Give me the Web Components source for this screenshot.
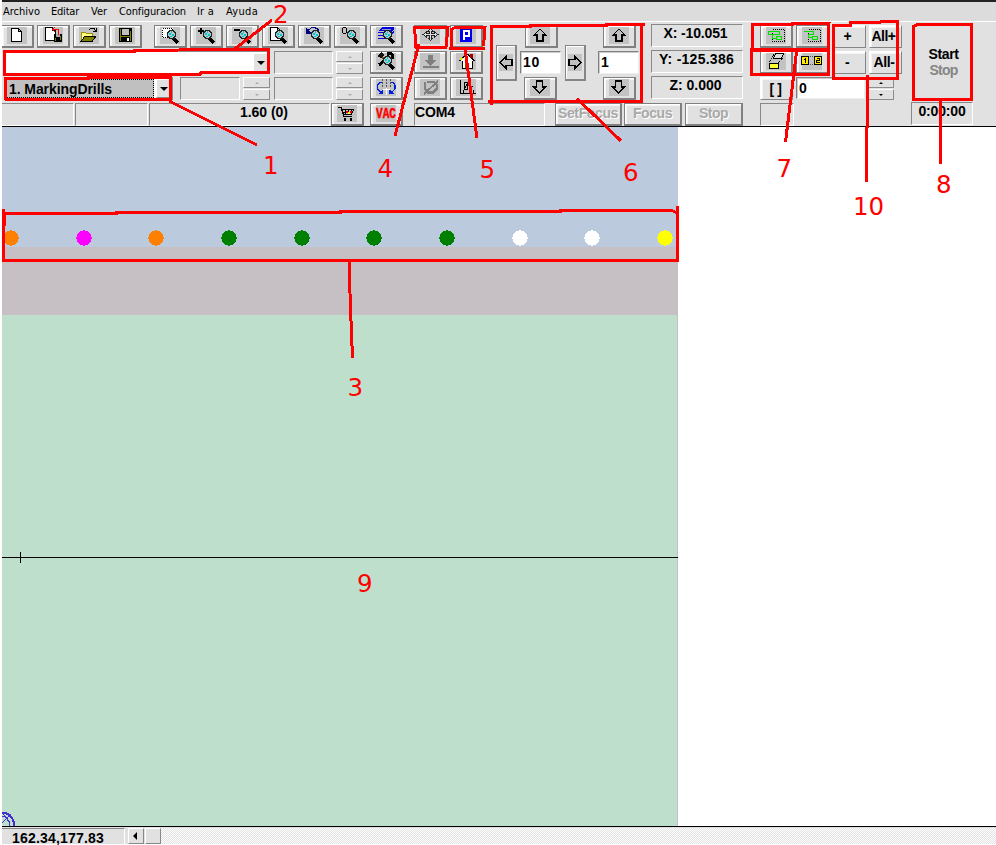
<!DOCTYPE html>
<html lang="es">
<head>
<meta charset="utf-8">
<title>MarkingDrills</title>
<style>
html,body{margin:0;background:#fff}
body{width:996px;height:845px;overflow:hidden;position:relative}
</style>
</head>
<body>
<cnc-app></cnc-app>
<script>
const glass = `<path d="M19 14l5 5" stroke="#000" stroke-width="3"/><circle cx="17.5" cy="10.5" r="4" fill="#b8c8c8" stroke="#222" stroke-width="1.3"/><path d="M15 9h2v2h-2zM18 10h2v2h-2zM17 7h1v2h-1zM16 12h2v1h-2z" fill="#00c8d0"/>`;
const page = (x, y) => `<path d="M${x + .5} ${y + .5}h7l3 3v10h-10zM${x + 7.5} ${y + .5}v3h3" fill="#fff" stroke="#000"/>`;
const arrow = (r, x, y) => `<path transform="translate(${x} ${y}) rotate(${r})" d="M0 -6L6 0H3V6H-3V0H-6Z" fill="#c0c0c0" stroke="#000" stroke-width="1.200"/>`;
const ICONS = {
  newdoc: page(10, 4),
  import: page(8, 3) + `<path d="M17 10h8v8h-8z" fill="#000"/><path d="M19 10h4v3h-4z" fill="#aaa"/><path d="M18 14h1v3h-1zM23 12h1v4h-1z" fill="#808000"/><path d="M16 5.500h5.500V11M18 3l-2 2.500 2 2.500" fill="none" stroke="#f00"/>`,
  open: `<path d="M8 17V8h4l1 1h6v3" fill="#ffff80" stroke="#a09000"/><path d="M8 17.500l4-5.500h11l-4 5.500z" fill="#808000" stroke="#000"/><path d="M16 5.500l2-1h3l2 3M20 7.500h3.500V4" fill="none" stroke="#000"/>`,
  save: `<path d="M10 4h13v14H10z" fill="#000"/><path d="M11 5h1v12h-1zM21 7h1v10h-1zM12 12h9v1h-9z" fill="#808000"/><path d="M13 5h7v6h-7z" fill="#c0c0c0"/><path d="M18 14h2v3h-2z" fill="#fff"/>`,
  zsel: `<path d="M8 4h11v10H8z" fill="#fff"/><path d="M8.500 4.500h10v9h-10z" fill="none" stroke="#000" stroke-dasharray="1 1"/>` + glass,
  zin: `<path d="M8 7h6M11 4v6" stroke="#000" stroke-width="2"/>` + glass,
  zout: `<path d="M8 6h6" stroke="#000" stroke-width="2"/>` + glass,
  zpage: page(8, 3) + glass,
  zback: `<path d="M10 7c3-5 9-4 11 0" fill="none" stroke="#000080"/><path d="M8 4v6h6z" fill="#000080"/>` + glass,
  zzero: `<path d="M9.500 3.500h2l1 1v4l-1 1h-2l-1-1v-4z" fill="none" stroke="#000"/>` + glass,
  zlayers: `<path d="M12 3h12l-4 4H8z" fill="#0000e0"/><path d="M12 5h9" stroke="#99b"/><path d="M8 8.500h12l4-4M8 11.500h12l4-4M8 14.500h12" stroke="#0000e0" stroke-width="1.500" fill="none"/>` + glass,
  tools: `<path d="M9 15l10-9M17 3l5 1 1 5" stroke="#000" stroke-width="3" fill="none"/><path d="M10 5l9 8" stroke="#806000" stroke-width="2"/><path d="M7 6l4-4 4 3-4 3z" fill="#111"/>` + glass,
  rotate: `<path d="M12 6.500H9.500L7.500 9v4l4 4M20 6.500h3l2 2.500v4l-4 4" fill="none" stroke="#0020e0" stroke-width="1.300"/><path d="M13 18H8l5-5zM19 18h5l-5-5z" fill="#0020e0"/><path d="M12.500 3v8M16.500 3v8M20.500 3v8" stroke="#555" stroke-dasharray="2 1"/><path d="M13 13.500h7M16.500 12v7" stroke="#fff"/>`,
  cart: `<path d="M7 5.500h3l3 9h8M10.500 7.500h12l-2 5h-8M14.500 8v5M17.500 8v5M20.500 8v5M12 10.500h10" fill="none" stroke="#000"/><path d="M13 16h2v3h-2zM19 16h2v3h-2z"/><path d="M15 9h2v2h-2zM19 9h2v2h-2z" fill="#e00"/><path d="M17 10h2v2h-2z" fill="#ff0"/>`,
  vac: '',
  move: `<path d="M16.500 4.500l2.500 2.500h-1.500v2.500h3V8l3.500 2.500-3.500 2.500v-1.500h-3V14H19l-2.500 2.500L14 14h1.500v-2.500h-3V13L9 10.500 12.500 8v1.500h3V7H14z" fill="#ddd" stroke="#222"/>`,
  park: `<path d="M10 4h12v14H10z" fill="#0000f0"/><path d="M14 16V7h5v5h-4" fill="none" stroke="#fff" stroke-width="2"/>`,
  down: `<path d="M14 5h5v5h4l-6.500 6L10 10h4zM9 16h16v2H9z" fill="#808080"/>`,
  home: `<path d="M12 10h10v8H12z" fill="#fff" stroke="#000"/><path d="M9 11l8-7 8 7" fill="#fff" stroke="#000" stroke-width="1.300"/><path d="M20 4h3v4h-3z" fill="#a00"/><path d="M15 13h3v5h-3z" fill="#805000"/><path d="M10 10l2-2" stroke="#dd0" stroke-width="2"/>`,
  tool0: `<path d="M11 6v7l3 3.500h5l4-4V9l-3-3h-7" fill="none" stroke="#808080" stroke-width="2.500"/><path d="M10 18L24 5" fill="none" stroke="#808080" stroke-width="2"/>`,
  origin: `<path d="M10.500 4v13.500H26M13 17v-3M23 17v-3" fill="none" stroke="#000"/><path d="M14.500 6.500h3v7h-3zM19 13v-3h4M14 13l4-6" fill="none" stroke="#000"/>`,
  up: arrow(0, 16, 11), dn: arrow(180, 15.5, 11),
  sel1: `<path d="M12.500 5.500h12v12h-12z" fill="none" stroke="#000" stroke-dasharray="1 1"/><path d="M8.500 7.500h11v3h-11zM16.500 12.500h5v3h-5zM12.500 10.500v4h4" fill="none" stroke="#00e000"/>`,
  sel2: `<path d="M12.500 5.500h12v12h-12z" fill="none" stroke="#000" stroke-dasharray="1 1"/><path d="M8 7.500h9.500v3h-5v3h4M16.500 12.500h5v3h-5z" fill="none" stroke="#00e000"/>`,
  layers: `<path d="M9.500 12.500L14 4M18 13l5-5" stroke="#000" stroke-dasharray="1 1"/><path d="M15.500 3.500h8l-2 5h-8z" fill="#ddd" stroke="#000"/><path d="M9.500 13.500h9v5h-9z" fill="#ff3" stroke="#000"/>`,
  order: `<path d="M5.500 6.500h7v8h-7zM18.500 6.500h7v8h-7z" fill="#ffe800" stroke="#000"/><path d="M9.500 8v5M8 9.500h1M20.500 8.500h3v2h-3v2h3" fill="none" stroke="#000"/><path d="M14 6.500h4M14 14.500h4" stroke="#555" stroke-dasharray="1 1"/>`
};
const define = (name, html, setup) => {
  const t = document.createElement('template');
  t.innerHTML = html;
  customElements.define(name, class extends HTMLElement {
    connectedCallback() {
      if (this.shadowRoot) return;
      this.attachShadow({mode: 'open'}).append(t.content.cloneNode(true));
      if (setup) setup(this, this.shadowRoot);
    }
  });
};
const sizeFrom = el => {
  for (const [a, p] of [['w', 'width'], ['h', 'height'], ['ml', 'margin-left'], ['mr', 'margin-right'], ['mt', 'margin-top'], ['mb', 'margin-bottom']])
    if (el.hasAttribute(a)) el.style.setProperty(p, el.getAttribute(a) + 'px');
};

/* Text whose tracking is adjusted to occupy a fixed width. */
define('ui-label', `<style>:host{display:inline-block;white-space:pre;font:bold 14px/16px "Liberation Sans",sans-serif;flex:none}span{display:inline-block}</style><span></span>`, (el, r) => {
  const s = r.querySelector('span');
  s.textContent = el.getAttribute('text');
  sizeFrom(el);
  const w = +el.getAttribute('w');
  if (w) s.style.letterSpacing = (w - s.getBoundingClientRect().width) / s.textContent.length + 'px';
});

define('tool-button', `<style>
:host{display:flex;flex:none;box-sizing:border-box;width:33px;height:23px;align-items:center;justify-content:center;background:#e1e1e1;border:1px solid #808080;border-right-width:2px;border-bottom-width:2px;box-shadow:inset 1px 1px #fff,inset 2px 2px #f4f4f4;overflow:hidden}
:host([light]){border-color:#fff #858585 #858585 #fff;border-right-width:1px;border-bottom-width:1px}
:host([disabled]){color:#a9a9a9;text-shadow:1px 1px #fff}
svg{display:block;flex:none;width:33px;height:23px;margin:-1px -1px 0 -1px}
</style><slot></slot>`, (el, r) => {
  sizeFrom(el);
  const k = el.getAttribute('icon');
  if (k) r.querySelector('slot').insertAdjacentHTML('beforebegin', `<svg viewBox="0 0 33 23" shape-rendering="crispEdges"><path d="M6 3h20v17H6z" fill="#c3c3c3"/>${ICONS[k]}${k === 'vac' ? '<text x="6" y="16" textLength="20" lengthAdjust="spacingAndGlyphs" font-family="Liberation Mono,monospace" font-weight="bold" font-size="15" fill="#f00" stroke="#f00" stroke-width=".4">VAC</text>' : ''}</svg>`);
});

define('side-button', `<style>:host{display:flex;flex:none;box-sizing:border-box;width:21px;height:36px;align-items:center;justify-content:center;background:#e1e1e1;border:1px solid #858585;border-right-width:2px;border-bottom-width:2px;box-shadow:inset 1px 1px #fff}svg{display:block;width:16px;height:19px}</style><svg viewBox="0 0 16 19" shape-rendering="crispEdges"><path d="M1 1h14v17H1z" fill="#c3c3c3"/><g></g></svg>`, (el, r) => {
  sizeFrom(el);
  r.querySelector('g').innerHTML = arrow(el.getAttribute('dir') === 'left' ? -90 : 90, 8, 9.5);
});

define('ui-panel', `<style>:host{display:flex;flex:none;box-sizing:border-box;height:23px;border:1px solid;border-color:#888 #fff #fff #888}:host([right]){justify-content:flex-end}:host([center]){justify-content:center}</style><slot></slot>`, sizeFrom);

define('ui-input', `<style>:host{display:flex;flex:none;box-sizing:border-box;background:#fff;height:22px;width:41px;border:1px solid;border-color:#808080 #eee #eee #808080;padding:2px 0 0 2px;box-shadow:inset 1px 1px #ccc}</style><slot></slot>`, sizeFrom);

define('ui-spinner', `<style>:host{display:flex;flex:none;flex-direction:column;gap:1px;width:27px;height:23px}
i{flex:1;display:flex;align-items:center;justify-content:center;background:#e1e1e1;border:1px solid;border-color:#fff #8d8d8d #8d8d8d #fff;box-sizing:border-box}
b{border:2px solid transparent;border-top:0;border-bottom:2px solid #aaa;width:0}i+i b{border-bottom:0;border-top:2px solid #aaa}
:host([active]) b{border-bottom-color:#000;border-top-color:#000}</style><i><b></b></i><i><b></b></i>`, sizeFrom);

define('ui-combo', `<style>:host{display:flex;flex:none;box-sizing:border-box;border:1px solid #888;background:#fff;height:23px}
div{flex:1;display:flex;align-items:center;margin:1px;box-sizing:border-box}
:host([filled]) div{background:#c0c0c0;border:1px dotted #000}
i{width:15px;margin:1px;display:flex;align-items:center;justify-content:center;background:#e1e1e1;border:1px solid;border-color:#fff #888 #888 #fff;box-sizing:border-box}
b{border:4px solid transparent;border-top-color:#000;border-bottom:0}</style><div><slot></slot></div><i><b></b></i>`, sizeFrom);

define('tool-group', `<style>:host{display:flex;flex:none;flex-direction:column;gap:3px}</style><slot></slot>`, sizeFrom);
define('tool-row', `<style>:host{display:flex;flex:none;height:23px;gap:3px}</style><slot></slot>`, sizeFrom);

define('menu-bar', `<style>:host{display:flex;height:21px;box-sizing:border-box;border-top:2px solid #222;background:#dcdcdc;padding-left:1px}ui-label{font:11px/19px "DejaVu Sans Condensed","DejaVu Sans",sans-serif}</style>
<ui-label text="Archivo" w="37"></ui-label><ui-label text="Editar" ml="11" w="28"></ui-label><ui-label text="Ver" ml="12" w="16"></ui-label><ui-label text="Configuracion" ml="12" w="67"></ui-label><ui-label text="Ir a" ml="11" w="17"></ui-label><ui-label text="Ayuda" ml="12" w="32"></ui-label>`);

define('main-toolbar', `<style>:host{display:flex;align-items:flex-start;height:105px;box-sizing:border-box;border-top:1px solid #fff;padding-top:3px;background:#e1e1e1;overflow:hidden}
.arrows{display:flex;flex:none;height:75px;align-items:center}
.start{display:flex;flex-direction:column;align-items:center;box-sizing:border-box;width:60px;height:74px;border:1px solid;border-color:#fff #888 #888 #fff;padding:20px 0 0 3px}
.start ui-label+ui-label{color:#858585}</style>
<tool-group w="365" ml="-1">
 <tool-row><tool-button icon="newdoc"></tool-button><tool-button icon="import"></tool-button><tool-button icon="open"></tool-button><tool-button icon="save"></tool-button><tool-button icon="zsel" ml="9"></tool-button><tool-button icon="zin"></tool-button><tool-button icon="zout"></tool-button><tool-button icon="zpage"></tool-button><tool-button icon="zback"></tool-button><tool-button icon="zzero"></tool-button></tool-row>
 <tool-row><ui-combo w="267" ml="2"></ui-combo><ui-panel w="59" ml="1"></ui-panel><ui-spinner></ui-spinner></tool-row>
 <tool-row><ui-combo w="169" ml="3" filled><ui-label text="1. MarkingDrills" w="103" ml="2"></ui-label></ui-combo><ui-panel w="60" ml="4"></ui-panel><ui-spinner></ui-spinner><ui-panel w="59" ml="1"></ui-panel><ui-spinner></ui-spinner></tool-row>
 <tool-row style="gap:1px"><ui-panel w="73"></ui-panel><ui-panel w="73"></ui-panel><ui-panel w="181" right><ui-label text="1.60 (0)" w="48" mr="41"></ui-label></ui-panel><tool-button icon="cart"></tool-button></tool-row>
</tool-group>
<tool-group ml="4"><tool-button icon="zlayers"></tool-button><tool-button icon="tools"></tool-button><tool-button icon="rotate"></tool-button><tool-button icon="vac"></tool-button></tool-group>
<tool-group ml="11" w="70">
 <tool-row><tool-button icon="move"></tool-button><tool-button icon="park"></tool-button></tool-row>
 <tool-row><tool-button icon="down"></tool-button><tool-button icon="home"></tool-button></tool-row>
 <tool-row><tool-button icon="tool0"></tool-button><tool-button icon="origin"></tool-button></tool-row>
 <tool-row><ui-panel w="131"><ui-label text="COM4" w="40"></ui-label></ui-panel><tool-button disabled w="67" ml="7"><ui-label text="SetFocus" w="60" mb="3"></ui-label></tool-button><tool-button disabled w="58" ml="-1"><ui-label text="Focus" w="39" mb="3"></ui-label></tool-button><tool-button disabled w="58"><ui-label text="Stop" w="29" mb="3"></ui-label></tool-button></tool-row>
</tool-group>
<div class="arrows">
 <side-button dir="left" ml="12"></side-button>
 <tool-group ml="3" style="align-items:center"><tool-button icon="up" ml="1"></tool-button><ui-input h="23"><ui-label text="10" w="17"></ui-label></ui-input><tool-button icon="dn"></tool-button></tool-group>
 <side-button dir="right" ml="4"></side-button>
 <tool-group ml="12" style="align-items:center"><tool-button icon="up" ml="2"></tool-button><ui-input h="23"><ui-label text="1" w="8"></ui-label></ui-input><tool-button icon="dn" ml="2"></tool-button></tool-group>
</div>
<tool-group ml="12" mt="-1">
 <ui-panel w="92" center><ui-label text="X: -10.051" w="64" mr="3"></ui-label></ui-panel><ui-panel w="92" center><ui-label text="Y: -125.386" w="75" mr="1"></ui-label></ui-panel><ui-panel w="92" center><ui-label text="Z: 0.000" w="52" mr="3"></ui-label></ui-panel>
</tool-group>
<tool-group ml="17" w="139">
 <tool-row><tool-button icon="sel1"></tool-button><tool-button icon="sel2"></tool-button><tool-button light w="34"><ui-label text="+" w="8" mr="3" mb="1"></ui-label></tool-button><tool-button light><ui-label text="All+" w="24" mr="4" mb="1"></ui-label></tool-button></tool-row>
 <tool-row><tool-button icon="layers"></tool-button><tool-button icon="order"></tool-button><tool-button light w="34"><ui-label text="-" w="5" mr="3" mb="1"></ui-label></tool-button><tool-button light><ui-label text="All-" w="21" mr="3" mb="1"></ui-label></tool-button></tool-row>
 <tool-row><tool-button light><ui-label text="[ ]" w="12" mr="2"></ui-label></tool-button><ui-input w="69"><ui-label text="0" w="8"></ui-label></ui-input><ui-spinner active ml="-1"></ui-spinner></tool-row>
 <ui-panel w="34"></ui-panel>
</tool-group>
<tool-group ml="13"><div class="start"><ui-label text="Start" w="30"></ui-label><ui-label text="Stop" w="28"></ui-label></div><ui-panel w="62" ml="-1" center><ui-label text="0:00:00" w="47"></ui-label></ui-panel></tool-group>`);

define('work-area', `<style>:host{display:flex;flex-direction:column;position:relative;height:701px;box-sizing:border-box;border-top:1px solid #000;border-bottom:1px solid #000;background:#fff}
div{width:676px}.sky{height:120px;background:#bbcadd}.clamp{height:68px;background:#c6c0c4}.bed{flex:1;background:#bddfcc;width:675px;border-right:1px solid #c6c0c4}
svg{position:absolute;left:0;top:0}</style><div class="sky"></div><div class="clamp"></div><div class="bed"></div>
<svg width="677" height="699" viewBox="2 127 677 699" shape-rendering="crispEdges"><g id="d"></g><path d="M2 557.500H678M20.500 552v11" stroke="#000"/><g fill="none" stroke="#4830d0"><circle cx="1.500" cy="825" r="12.500" stroke-width="2"/><path d="M2 816c5 1 7 4 8 10M2 813l8 9M2 823l9-9"/></g></svg>`, (el, r) => {
  r.querySelector('#d').innerHTML = [[11, '#ff8000'], [84, '#f0f'], [156, '#ff8000'], [229, '#008000'], [302, '#008000'], [374, '#008000'], [447, '#008000'], [520, '#fff'], [592, '#fff'], [665, '#ff0']].map(([x, c]) => `<circle cx="${x}" cy="238" r="7.700" fill="${c}"/>`).join('');
});

define('status-bar', `<style>:host{display:flex;height:17px;background:#e1e1e1}
.pos{width:123px;box-sizing:border-box;border-top:1px solid #888;border-right:1px solid #fff;margin-top:1px;padding-left:10px}
.pos ui-label{line-height:15px}
.b{box-sizing:border-box;width:16px;margin-left:3px;margin-top:1px;border:1px solid;border-color:#fff #888 #888 #fff;display:flex;align-items:center;justify-content:center}
.b+.b{margin-left:1px}.b i{border:4px solid transparent;border-right-color:#000;border-left:0;margin-right:3px}
.track{flex:1;margin-top:1px;background:repeating-conic-gradient(#fff 0 25%,#e1e1e1 0 50%) 0 0/2px 2px}</style>
<div class="pos"><ui-label text="162.34,177.83" w="92"></ui-label></div><div class="b"><i></i></div><div class="b"></div><div class="track"></div>`);

/* Numbered callouts laid over the window. */
define('callout-layer', `<style>:host{display:block;position:absolute;inset:0;pointer-events:none}svg{display:block}text{font:24.500px "DejaVu Sans",sans-serif;fill:#f00}</style>
<svg width="996" height="845" viewBox="0 0 996 845"><g fill="none" stroke="#f00" stroke-width="3" shape-rendering="crispEdges">
<path d="M5.500 100V78.500H88V77H170.500V99.500H5M169 101L257 145"/>
<path d="M4.500 75V51.500H134V50.500L269 49M268.500 48V72.500L201 73L200 74H66V74.500H3M234 49.500L272 20"/>
<path d="M413 27.500H448L446 47.500H416L414.500 27M419 44L395 136"/>
<path d="M451 47V29.500L455 27.500H485L483.500 46M449 48.500H485M465 48L477 138"/>
<path d="M491.500 105V26.500H530V25.500H606V24.500H645M641.500 24V101.500H488M577 98.500L621 141"/>
<path d="M752.500 48V24.500H792V23.500H829L828 50.500H752M751.500 47.500V74.500H828.500V50L751 49.500M797 48L785.500 142"/>
<path d="M833.500 79V25.500H850V22.500H880L881 21.500H898L897.500 78.500H832M867.500 75V125L866.500 130V182"/>
<path d="M913.500 99V26.500L917 24.500H971.500V99.500H912M940.500 98V164"/>
<path d="M3.500 262V209M4.500 226V213.500H116V212.500H340V211.500H560V210.500H672L675 212H678M677.500 206V260.500H2M349.500 262V278L350.500 308L352.500 358"/></g>
<text x="263" y="174">1</text><text x="273" y="23">2</text><text x="347.500" y="395.500">3</text><text x="377.500" y="177">4</text><text x="479.500" y="178">5</text><text x="623" y="180.500">6</text><text x="776.500" y="177">7</text><text x="936" y="192.500">8</text><text x="357" y="591.500">9</text><text x="853" y="215">10</text></svg>`);

define('cnc-app', `<style>:host{display:flex;flex-direction:column;height:845px;padding-left:2px;box-sizing:border-box;overflow:hidden;color:#000}</style>
<menu-bar></menu-bar><main-toolbar></main-toolbar><work-area></work-area><status-bar></status-bar><callout-layer></callout-layer>`);
</script>
</body>
</html>
